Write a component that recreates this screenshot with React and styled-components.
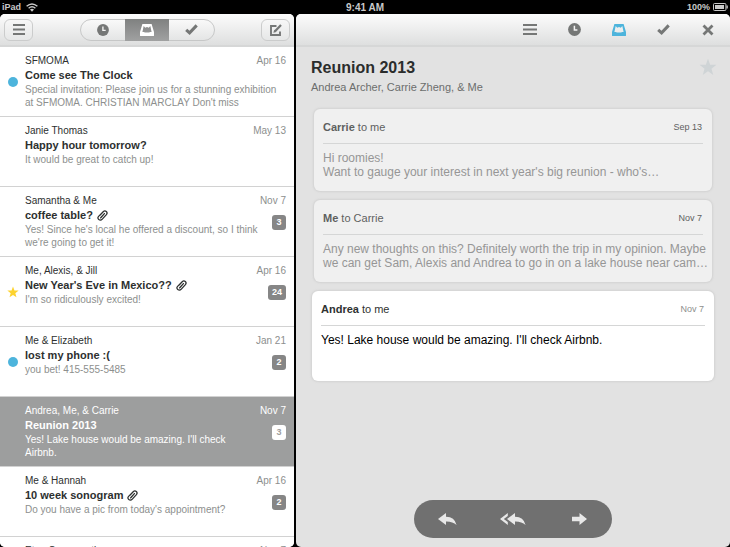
import React from "react";
import styled, { createGlobalStyle, css } from "styled-components";

const GlobalStyle = createGlobalStyle`
  * { box-sizing: border-box; }
  html, body { margin: 0; background: #000; }
  body { font-family: "Liberation Sans", Arial, sans-serif; font-size: 11px; color: #333635; }
  button { font: inherit; border: 0; padding: 0; margin: 0; background: none; color: inherit; cursor: pointer; }
  h1, h2, p { margin: 0; font-weight: normal; font-size: inherit; }
`;

const Screen = styled.div`
  display: flex;
  flex-direction: column;
  height: 100vh;
  overflow: hidden;
`;

const StatusBar = styled.div`
  display: grid;
  grid-template-columns: 1fr auto 1fr;
  align-items: center;
  height: 14px;
  padding: 0 2px;
  color: #c9c9c9;
  font-size: 9px;
  font-weight: bold;
`;

const StatusGroup = styled.div`
  display: flex;
  align-items: center;
  justify-content: ${(p) => (p.$end ? "flex-end" : "flex-start")};
  gap: ${(p) => (p.$end ? 3 : 5)}px;
`;

const Clock = styled.span`
  font-size: 10px;
`;

const Panes = styled.div`
  flex: 1;
  min-height: 0;
  display: grid;
  grid-template-columns: 294px 1fr;
  gap: 2px;
`;

const paneShape = css`
  display: flex;
  flex-direction: column;
  min-width: 0;
  min-height: 0;
  overflow: hidden;
  border-radius: 5px;
`;

const Sidebar = styled.section`
  ${paneShape}
  background: #fff;
`;

const Reader = styled.main`
  ${paneShape}
  background: #e2e2e2;
`;

const Toolbar = styled.header`
  display: flex;
  flex: none;
  align-items: center;
  height: 33px;
  border-bottom: 2px solid #d6d7d7;
  color: #757776;
  background: linear-gradient(#fcfcfc, #dedfdf);
`;

const ListToolbar = styled(Toolbar)`
  justify-content: space-between;
  padding: 0 4px;
`;

const ReaderToolbar = styled(Toolbar)`
  justify-content: flex-end;
`;

const ToolButton = styled.button`
  display: grid;
  place-items: center;
  width: 29px;
  height: 22px;
  border: 1px solid #cbcccc;
  border-radius: 6px;
  background: linear-gradient(#f7f7f7, #e6e7e7);
`;

const Segments = styled.div`
  display: grid;
  grid-template-columns: repeat(3, 1fr);
  width: 135px;
  height: 22px;
  border: 1px solid #c6c7c7;
  border-radius: 11px;
  background: linear-gradient(#f9f9f9, #e4e5e5);
`;

const Segment = styled.button`
  display: grid;
  place-items: center;
  ${(p) =>
    p.$active &&
    css`
      margin: -1px 0;
      color: #fff;
      background: linear-gradient(#7f8180, #a0a1a1);
    `}
`;

const Actions = styled.div`
  display: grid;
  grid-template-columns: repeat(5, 1fr);
  width: 222px;
  height: 100%;
`;

const Action = styled.button`
  display: grid;
  place-items: center;
  color: ${(p) => (p.$active ? "#4db4dc" : "inherit")};
`;

const List = styled.ul`
  flex: 1;
  min-height: 0;
  margin: 0;
  padding: 0;
  list-style: none;
  overflow: hidden;
`;

const Row = styled.li`
  display: grid;
  grid-template-columns: 25px 1fr auto;
  height: 70px;
  padding-right: 8px;
  border-bottom: 1px solid #d2d2d2;
  color: ${(p) => (p.$selected ? "#fff" : "#2d302f")};
  background: ${(p) => (p.$selected ? "#9d9e9e" : "#fff")};
  --muted: ${(p) => (p.$selected ? "#fff" : "#8d8f8e")};
`;

const Marker = styled.div`
  display: grid;
  place-items: center;
`;

const UnreadDot = styled.span`
  width: 10px;
  height: 10px;
  border-radius: 50%;
  background: #4db4dc;
`;

const Summary = styled.div`
  padding-top: 7px;
  white-space: nowrap;
`;

const Sender = styled.p`
  line-height: 13px;
  font-size: 10px;
`;

const Subject = styled.h2`
  display: flex;
  align-items: center;
  gap: 4px;
  font-size: 11px;
  line-height: 16px;
  font-weight: bold;
`;

const Preview = styled.p`
  height: 26px;
  white-space: pre;
  font-size: 10px;
  line-height: 13px;
  color: var(--muted);
`;

const Meta = styled.div`
  display: flex;
  flex-direction: column;
  align-items: flex-end;
  gap: 8px;
  width: 0;
  padding-top: 7px;
  white-space: nowrap;
`;

const RowDate = styled.time`
  line-height: 13px;
  font-size: 10px;
  color: var(--muted);
`;

const Badge = styled.span`
  min-width: 14px;
  padding: 0 4px;
  border-radius: 3px;
  text-align: center;
  line-height: 15px;
  font-size: 9px;
  font-weight: bold;
  color: ${(p) => (p.$selected ? "#9d9e9e" : "#fff")};
  background: ${(p) => (p.$selected ? "#fff" : "#868686")};
`;

const Heading = styled.div`
  display: flex;
  justify-content: space-between;
  align-items: flex-start;
  padding: 11px 13px 13px 15px;
`;

const Title = styled.h1`
  font-size: 16px;
  line-height: 20px;
  font-weight: bold;
  color: #2b2d2c;
`;

const People = styled.p`
  font-size: 11px;
  line-height: 18px;
  color: #6c6e6d;
`;

const Thread = styled.div`
  display: flex;
  flex-direction: column;
  gap: 9px;
  padding: 0 16px;
`;

const Card = styled.article`
  margin: 0 ${(p) => (p.$open ? 0 : 2)}px;
  min-height: ${(p) => (p.$open ? 90 : 82)}px;
  padding: 0 9px;
  border-radius: 6px;
  box-shadow: 0 0 2px 1px #d2d2d2;
  color: ${(p) => (p.$open ? "#2f3231" : "#5e605f")};
  background: ${(p) => (p.$open ? "#fff" : "#f0f0f0")};
`;

const CardHead = styled.div`
  display: flex;
  justify-content: space-between;
  align-items: center;
  height: 35px;
  padding: 2px 1px 0 0;
  border-bottom: 1px solid #d5d6d6;
`;

const CardDate = styled.time`
  font-size: 9px;
  color: ${(p) => (p.$open ? "#8d8f8e" : "inherit")};
`;

const CardText = styled.p`
  padding-top: 7px;
  white-space: pre;
  font-size: 12px;
  line-height: 14px;
  color: ${(p) => (p.$open ? "#000" : "#969696")};
`;

const ReplyBar = styled.div`
  display: grid;
  grid-template-columns: repeat(3, 1fr);
  width: 198px;
  height: 38px;
  margin: auto auto 9px;
  border-radius: 19px;
  color: #e8e8e8;
  background: #707070;
`;

const Reply = styled.button`
  display: grid;
  place-items: center;
`;

const Lines = ({ width = 14 }) => (
  <svg width={width} height="11" viewBox="0 0 14 11" preserveAspectRatio="none" stroke="currentColor" strokeWidth="2">
    <path d="M0 1H14M0 5.5H14M0 10H14" />
  </svg>
);

const ClockIcon = ({ size = 13 }) => (
  <svg width={size} height={size} viewBox="0 0 13 13">
    <circle cx="6.5" cy="6.5" r="6.4" fill="currentColor" />
    <path d="M6.4 2.8V6.9H9.4" fill="none" stroke="#f3f3f3" strokeWidth="1.5" />
  </svg>
);

const TrayIcon = () => (
  <svg width="14" height="12" viewBox="0 0 14 12">
    <path
      fill="currentColor"
      fillRule="evenodd"
      d="M2.4 0H11.6L14 8V11.4Q14 12 13.4 12H.6Q0 12 0 11.4V8ZM3.7 2L2.4 8H4L4.8 8.6H9.2L10 8H11.6L10.3 2L8.8 3.8L7 3L5.2 3.8Z"
    />
  </svg>
);

const CheckIcon = () => (
  <svg width="13" height="11" viewBox="0 0 13 11">
    <path d="M1.2 5.8L4.6 8.9L11.7 1.4" fill="none" stroke="currentColor" strokeWidth="3" />
  </svg>
);

const CloseIcon = () => (
  <svg width="12" height="12" viewBox="0 0 12 12">
    <path d="M1.5 1.5L10.5 10.5M10.5 1.5L1.5 10.5" stroke="currentColor" strokeWidth="2.8" />
  </svg>
);

const ComposeIcon = () => (
  <svg width="12" height="12" viewBox="0 0 12 12" fill="none" stroke="currentColor">
    <path d="M6.5 2H1V11H10V7.5" strokeWidth="1.9" />
    <path d="M5 7.2L11 1" strokeWidth="2.3" />
    <path d="M3.4 8.8L4.2 5.8L6.4 8Z" fill="currentColor" stroke="none" />
  </svg>
);

const StarIcon = ({ size }) => (
  <svg width={size} height={size} viewBox="0 0 20 20">
    <path fill="currentColor" d="M10 .8L12.4 7.4L19.4 7.6L13.9 11.9L15.8 18.8L10 14.8L4.2 18.8L6.1 11.9L.6 7.6L7.6 7.4Z" />
  </svg>
);

const ClipIcon = () => (
  <svg width="11" height="11" viewBox="0 0 11 11" fill="none" stroke="currentColor" strokeWidth="1.3" strokeLinecap="round">
    <path d="M4.2 7.2L7.4 3.6M3.1 5L6.2 1.7Q7.8.2 9.3 1.5Q10.8 2.9 9.4 4.6L5.3 9.1Q3.6 10.9 1.8 9.5Q.1 8 1.6 6.4L5 2.9M5 6.3L3.6 7.9" />
  </svg>
);

const WifiIcon = () => (
  <svg width="12" height="9" viewBox="0 0 12 9" fill="none" stroke="currentColor" strokeWidth="1.4">
    <path d="M.6 3.3Q6-1.5 11.4 3.3M2.6 5.3Q6 2.3 9.4 5.3" />
    <path d="M4 6.6Q6 5 8 6.6L6 8.8Z" fill="currentColor" stroke="none" />
  </svg>
);

const BatteryIcon = () => (
  <svg width="15" height="8" viewBox="0 0 15 8">
    <rect x=".5" y=".5" width="12.4" height="7" rx="1" fill="none" stroke="currentColor" />
    <rect x="2" y="2" width="9" height="4" fill="currentColor" />
    <path d="M13.4 2.5H14.8V5.5H13.4Z" fill="currentColor" />
  </svg>
);

const replyPath = "M0 6L8 0V3.7Q16.5 3.6 18.6 12Q14.5 8.3 8 8.5V12Z";

const ReplyIcon = () => (
  <svg width="19" height="12" viewBox="0 0 19 12" fill="currentColor">
    <path d={replyPath} />
  </svg>
);

const ReplyAllIcon = () => (
  <svg width="26" height="12" viewBox="0 0 26 12" fill="currentColor">
    <path d={replyPath} transform="translate(7 0)" />
    <path d="M0 6L7.8 0V2.9L3.8 6L7.8 9.1V12Z" />
  </svg>
);

const ForwardIcon = () => (
  <svg width="15" height="12" viewBox="0 0 15 12">
    <path d="M0 3.8H7.5V0L15 6L7.5 12V8.2H0Z" fill="currentColor" />
  </svg>
);

const mails = [
  { from: "SFMOMA", date: "Apr 16", subject: "Come see The Clock", unread: true, text: "Special invitation: Please join us for a stunning exhibition\nat SFMOMA. CHRISTIAN MARCLAY Don't miss" },
  { from: "Janie Thomas", date: "May 13", subject: "Happy hour tomorrow?", text: "It would be great to catch up!" },
  { from: "Samantha & Me", date: "Nov 7", subject: "coffee table?", clip: true, count: 3, text: "Yes! Since he's local he offered a discount, so I think\nwe're going to get it!" },
  { from: "Me, Alexis, & Jill", date: "Apr 16", subject: "New Year's Eve in Mexico??", clip: true, starred: true, count: 24, text: "I'm so ridiculously excited!" },
  { from: "Me & Elizabeth", date: "Jan 21", subject: "lost my phone :(", unread: true, count: 2, text: "you bet! 415-555-5485" },
  { from: "Andrea, Me, & Carrie", date: "Nov 7", subject: "Reunion 2013", selected: true, count: 3, text: "Yes! Lake house would be amazing. I'll check\nAirbnb." },
  { from: "Me & Hannah", date: "Apr 16", subject: "10 week sonogram", clip: true, count: 2, text: "Do you have a pic from today's appointment?" },
  { from: "Etan Conversation", date: "Nov 7", subject: "", text: "" },
];

const thread = [
  { from: "Carrie", to: "me", date: "Sep 13", text: "Hi roomies!\nWant to gauge your interest in next year's big reunion - who's…" },
  { from: "Me", to: "Carrie", date: "Nov 7", text: "Any new thoughts on this? Definitely worth the trip in my opinion. Maybe\nwe can get Sam, Alexis and Andrea to go in on a lake house near cam…" },
  { from: "Andrea", to: "me", date: "Nov 7", open: true, text: "Yes! Lake house would be amazing. I'll check Airbnb." },
];

const Gold = styled.span`
  display: flex;
  color: #fdd32f;
`;

const StarButton = styled.button`
  display: flex;
  color: #cfd4d6;
`;

const MailRow = ({ mail }) => (
  <Row $selected={mail.selected}>
    <Marker>
      {mail.unread && <UnreadDot />}
      {mail.starred && <Gold><StarIcon size={12} /></Gold>}
    </Marker>
    <Summary>
      <Sender>{mail.from}</Sender>
      <Subject>
        {mail.subject}
        {mail.clip && <ClipIcon />}
      </Subject>
      <Preview>{mail.text}</Preview>
    </Summary>
    <Meta>
      <RowDate>{mail.date}</RowDate>
      {mail.count && <Badge $selected={mail.selected}>{mail.count}</Badge>}
    </Meta>
  </Row>
);

export default function App() {
  return (
    <Screen>
      <GlobalStyle />
      <StatusBar>
        <StatusGroup>
          <span>iPad</span>
          <WifiIcon />
        </StatusGroup>
        <Clock>9:41 AM</Clock>
        <StatusGroup $end>
          <span>100%</span>
          <BatteryIcon />
        </StatusGroup>
      </StatusBar>
      <Panes>
        <Sidebar>
          <ListToolbar>
            <ToolButton aria-label="Menu"><Lines width={12} /></ToolButton>
            <Segments>
              <Segment aria-label="Later"><ClockIcon size={12} /></Segment>
              <Segment $active aria-label="Inbox"><TrayIcon /></Segment>
              <Segment aria-label="Archive"><CheckIcon /></Segment>
            </Segments>
            <ToolButton aria-label="Compose"><ComposeIcon /></ToolButton>
          </ListToolbar>
          <List>
            {mails.map((mail) => (
              <MailRow key={mail.from} mail={mail} />
            ))}
          </List>
        </Sidebar>
        <Reader>
          <ReaderToolbar>
            <Actions>
              <Action aria-label="Lists"><Lines /></Action>
              <Action aria-label="Later"><ClockIcon /></Action>
              <Action $active aria-label="Inbox"><TrayIcon /></Action>
              <Action aria-label="Archive"><CheckIcon /></Action>
              <Action aria-label="Delete"><CloseIcon /></Action>
            </Actions>
          </ReaderToolbar>
          <Heading>
            <div>
              <Title>Reunion 2013</Title>
              <People>Andrea Archer, Carrie Zheng, & Me</People>
            </div>
            <StarButton aria-label="Star"><StarIcon size={18} /></StarButton>
          </Heading>
          <Thread>
            {thread.map((m) => (
              <Card key={m.from} $open={m.open}>
                <CardHead>
                  <span><b>{m.from}</b> to {m.to}</span>
                  <CardDate $open={m.open}>{m.date}</CardDate>
                </CardHead>
                <CardText $open={m.open}>{m.text}</CardText>
              </Card>
            ))}
          </Thread>
          <ReplyBar>
            <Reply aria-label="Reply"><ReplyIcon /></Reply>
            <Reply aria-label="Reply all"><ReplyAllIcon /></Reply>
            <Reply aria-label="Forward"><ForwardIcon /></Reply>
          </ReplyBar>
        </Reader>
      </Panes>
    </Screen>
  );
}
